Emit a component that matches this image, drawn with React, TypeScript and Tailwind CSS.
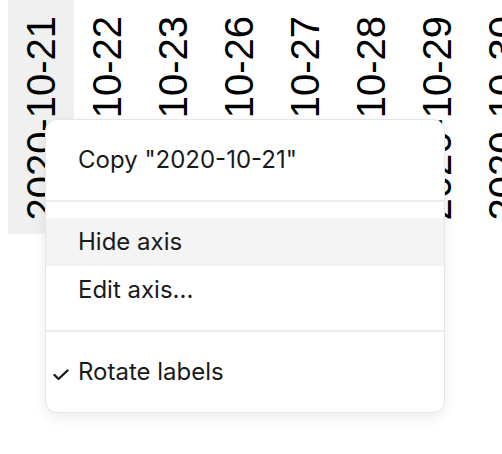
const labels = [
  '2020-10-21',
  '2020-10-22',
  '2020-10-23',
  '2020-10-26',
  '2020-10-27',
  '2020-10-28',
  '2020-10-29',
  '2020-10-30',
]

function MenuItem({ label, active, checked }: { label: string; active?: boolean; checked?: boolean }) {
  return (
    <div className={`relative flex h-12 items-center pl-8 ${active ? 'bg-[#f4f4f4]' : ''}`}>
      {checked && (
        <svg
          className="absolute left-[7px] top-[21px] h-[12px] w-[16px]"
          viewBox="0 0 16 12"
          fill="none"
          stroke="#1a1a1a"
          strokeWidth="2.4"
          strokeLinecap="round"
          strokeLinejoin="round"
        >
          <polyline points="1.5,6 5.5,10 14.5,1.5" />
        </svg>
      )}
      <span>{label}</span>
    </div>
  )
}

export default function App() {
  return (
    <div className="relative h-[454px] w-[502px] overflow-hidden bg-white">
      <div className="flex pl-2">
        {labels.map((label, i) => (
          <div
            key={label}
            className={`flex h-[234px] w-[66px] shrink-0 flex-col items-center justify-end pb-[13px] ${i === 0 ? 'bg-[#f0f0f0]' : ''}`}
          >
            <span
              className="rotate-180 text-[40px] leading-none text-black [writing-mode:vertical-rl]"
              style={{ fontFamily: '"Liberation Sans", Arial, sans-serif' }}
            >
              {label}
            </span>
          </div>
        ))}
      </div>

      <div
        className="absolute left-[45px] top-[119px] w-[400px] rounded-xl border border-[#e6e6e6] bg-white text-[24px] text-[#1a1a1a] shadow-[0_4px_14px_rgba(0,0,0,0.08)]"
        style={{ fontFamily: 'Inter, "Noto Sans", sans-serif' }}
      >
        <div className="py-4">
          <MenuItem label={'Copy "2020-10-21"'} />
        </div>
        <div className="h-[2px] bg-[#ececec]" />
        <div className="py-4">
          <MenuItem label="Hide axis" active />
          <MenuItem label="Edit axis..." />
        </div>
        <div className="h-[2px] bg-[#ececec]" />
        <div className="py-4">
          <MenuItem label="Rotate labels" checked />
        </div>
      </div>
    </div>
  )
}
